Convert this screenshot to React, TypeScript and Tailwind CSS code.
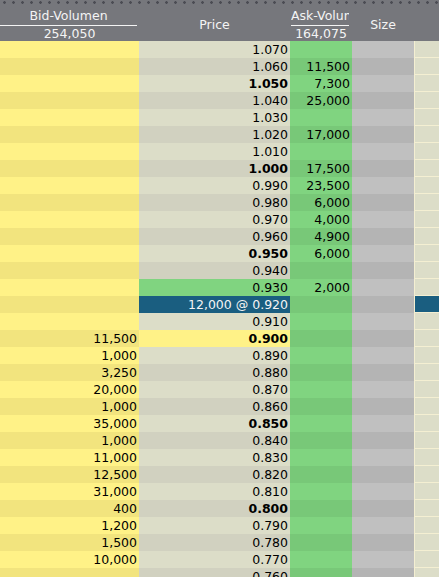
import React from 'react';

type Row = {
  price: string;
  bid?: string;
  ask?: string;
  bold?: boolean;
  hl?: 'green' | 'blue' | 'yellow';
};

const rows: Row[] = [
  { price: '1.070' },
  { price: '1.060', ask: '11,500' },
  { price: '1.050', ask: '7,300', bold: true },
  { price: '1.040', ask: '25,000' },
  { price: '1.030' },
  { price: '1.020', ask: '17,000' },
  { price: '1.010' },
  { price: '1.000', ask: '17,500', bold: true },
  { price: '0.990', ask: '23,500' },
  { price: '0.980', ask: '6,000' },
  { price: '0.970', ask: '4,000' },
  { price: '0.960', ask: '4,900' },
  { price: '0.950', ask: '6,000', bold: true },
  { price: '0.940' },
  { price: '0.930', ask: '2,000', hl: 'green' },
  { price: '12,000 @ 0.920', hl: 'blue' },
  { price: '0.910' },
  { price: '0.900', bid: '11,500', bold: true, hl: 'yellow' },
  { price: '0.890', bid: '1,000' },
  { price: '0.880', bid: '3,250' },
  { price: '0.870', bid: '20,000' },
  { price: '0.860', bid: '1,000' },
  { price: '0.850', bid: '35,000', bold: true },
  { price: '0.840', bid: '1,000' },
  { price: '0.830', bid: '11,000' },
  { price: '0.820', bid: '12,500' },
  { price: '0.810', bid: '31,000' },
  { price: '0.800', bid: '400', bold: true },
  { price: '0.790', bid: '1,200' },
  { price: '0.780', bid: '1,500' },
  { price: '0.770', bid: '10,000' },
  { price: '0.760' },
];

const cols = 'grid grid-cols-[139px_151px_62px_62px_1fr]';

function BookRow({ row, odd }: { row: Row; odd: boolean }) {
  let priceBg = odd ? 'bg-[#d1d1c0]' : 'bg-[#dcddc8]';
  let priceText = 'text-black';
  if (row.hl === 'green') priceBg = 'bg-[#80d480]';
  if (row.hl === 'yellow') priceBg = 'bg-[#fff287]';
  if (row.hl === 'blue') {
    priceBg = 'bg-[#1a5e80]';
    priceText = 'text-[#f4f4f4]';
  }

  return (
    <div className={`${cols} h-[17px] leading-[17px]`}>
      <div className={`${odd ? 'bg-[#f2e47e]' : 'bg-[#fff287]'} text-right pr-[2px]`}>{row.bid}</div>
      <div className={`${priceBg} ${priceText} ${row.bold ? 'font-bold' : ''} text-right pr-[2px]`}>
        {row.price}
      </div>
      <div className={`${odd ? 'bg-[#78c878]' : 'bg-[#80d480]'} text-right pr-[2px]`}>{row.ask}</div>
      <div className={odd ? 'bg-[#b4b4b4]' : 'bg-[#c0c0c0]'} />
      <div className={`${row.hl === 'blue' ? 'bg-[#1a5e80]' : 'bg-[#dcddc8]'} border-l border-b border-[#f4efd2]`} />
    </div>
  );
}

export default function App() {
  return (
    <div className="w-[439px] h-[577px] overflow-hidden bg-[#dcddc8] text-[12.5px] text-black font-['DejaVu_Sans',sans-serif]">
      {/* header */}
      <div className="bg-[#76777c] text-[#f4f4f4]">
        <div className="h-[6px] bg-[radial-gradient(circle,#4b4c53_1px,transparent_1.6px)] bg-[length:9px_5px] bg-[position:0px_0px]" />
        <div className={`${cols} h-[35px]`}>
          <div className="flex flex-col">
            <div className="h-[20px] leading-[19px] text-center mr-[2px] border-b border-[#f4f4f4]">Bid-Volumen</div>
            <div className="h-[15px] leading-[15px] text-center">254,050</div>
          </div>
          <div className="flex items-center justify-center pt-[3px]">Price</div>
          <div className="flex flex-col">
            <div className="h-[20px] leading-[19px] ml-[1px] mr-[3px] overflow-hidden whitespace-nowrap border-b border-[#f4f4f4]">
              Ask-Volumen
            </div>
            <div className="h-[15px] leading-[15px] text-center whitespace-nowrap">164,075</div>
          </div>
          <div className="flex items-center justify-center pt-[3px]">Size</div>
          <div />
        </div>
      </div>
      {/* rows */}
      <div>
        {rows.map((r, i) => (
          <BookRow key={i} row={r} odd={i % 2 === 1} />
        ))}
      </div>
    </div>
  );
}
